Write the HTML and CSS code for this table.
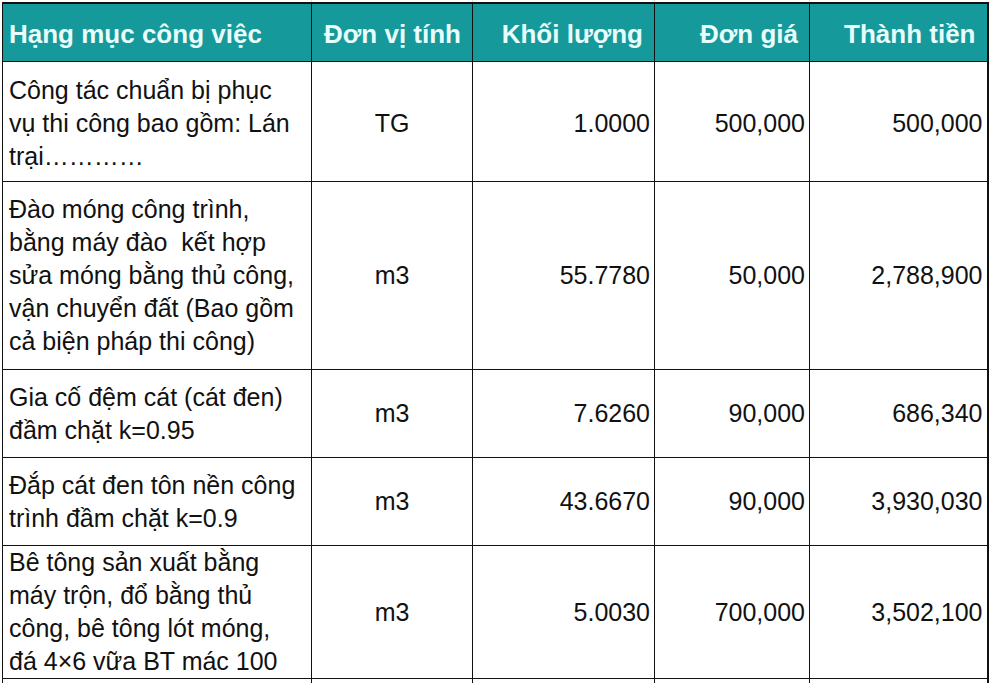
FILE: index.html
```html
<!DOCTYPE html>
<html lang="vi">
<head>
<meta charset="utf-8">
<title>Bảng dự toán</title>
<link rel="stylesheet" href="styles.css">
</head>
<body>
<table class="sheet">
  <colgroup>
    <col class="c1"><col class="c2"><col class="c3"><col class="c4"><col class="c5">
  </colgroup>
  <tr class="ghost"><td></td><td></td><td></td><td></td><td></td></tr>
  <tr class="head">
    <th class="left">Hạng mục công việc</th>
    <th>Đơn vị tính</th>
    <th>Khối lượng</th>
    <th>Đơn giá</th>
    <th>Thành tiền</th>
  </tr>
  <tr class="r1">
    <td class="text">Công tác chuẩn bị phục vụ thi công bao gồm: Lán trại…………</td>
    <td class="unit">TG</td>
    <td class="num">1.0000</td>
    <td class="num">500,000</td>
    <td class="num">500,000</td>
  </tr>
  <tr class="r2">
    <td class="text">Đào móng công trình, bằng máy đào&nbsp; kết hợp sửa móng bằng thủ công, vận chuyển đất (Bao gồm cả biện pháp thi công)</td>
    <td class="unit">m3</td>
    <td class="num">55.7780</td>
    <td class="num">50,000</td>
    <td class="num">2,788,900</td>
  </tr>
  <tr class="r3">
    <td class="text">Gia cố đệm cát (cát đen) đầm chặt k=0.95</td>
    <td class="unit">m3</td>
    <td class="num">7.6260</td>
    <td class="num">90,000</td>
    <td class="num">686,340</td>
  </tr>
  <tr class="r4">
    <td class="text">Đắp cát đen tôn nền công trình đầm chặt k=0.9</td>
    <td class="unit">m3</td>
    <td class="num">43.6670</td>
    <td class="num">90,000</td>
    <td class="num">3,930,030</td>
  </tr>
  <tr class="r5">
    <td class="text">Bê tông sản xuất bằng máy trộn, đổ bằng thủ công, bê tông lót móng, đá 4×6 vữa BT mác 100</td>
    <td class="unit">m3</td>
    <td class="num">5.0030</td>
    <td class="num">700,000</td>
    <td class="num">3,502,100</td>
  </tr>
  <tr class="r6">
    <td class="text top">Bê tông sản xuất bằng máy trộn, đổ bằng thủ công, bê tông móng</td>
    <td class="unit"></td>
    <td class="num"></td>
    <td class="num"></td>
    <td class="num"></td>
  </tr>
</table>
</body>
</html>
```

FILE: styles.css
```css
html, body {
  margin: 0;
  padding: 0;
  background: #ffffff;
  overflow: hidden;
}

body {
  font-family: "Liberation Sans", Arial, sans-serif;
  color: #111111;
  padding-left: 2px;
}

.sheet {
  border-collapse: collapse;
  table-layout: fixed;
  width: 985px;
}

.c1 { width: 309px; }
.c2 { width: 161px; }
.c3 { width: 182px; }
.c4 { width: 155px; }
.c5 { width: 178px; }

.sheet td,
.sheet th {
  border: 1px solid #111111;
  padding: 0;
  overflow: hidden;
}

.sheet td:last-child,
.sheet th:last-child {
  border-right: 2px solid #111111;
}

.ghost td {
  height: 2px;
  border-top: none;
  border-left: 1px solid #dcdcdc;
  border-right: 1px solid #dcdcdc;
}
.ghost td:first-child { border-left: none; }
.ghost td:last-child { border-right: none; }

.head th {
  height: 53px;
  background: #16999a;
  color: #e8fdfc;
  font-size: 26px;
  font-weight: bold;
  text-align: right;
  padding-right: 11px;
  padding-top: 4px;
  border-top: 2px solid #111111;
  border-bottom: 1px solid #111111;
  white-space: nowrap;
}

.head th.left {
  text-align: left;
  padding-left: 6px;
  padding-right: 0;
}

.sheet td {
  font-size: 25px;
  line-height: 33px;
  vertical-align: middle;
}

.text {
  padding-left: 6px !important;
  padding-right: 7px !important;
}

.unit { text-align: center; }

.num {
  text-align: right;
  padding-right: 4px !important;
}

.r1 td { height: 115px; padding-top: 4px; }
.r2 td { height: 187px; }
.r3 td { height: 87px; }
.r4 td { height: 87px; }
.r5 td { height: 132px; }
.r6 td { height: 120px; }

.top {
  vertical-align: top !important;
  padding-top: 2px !important;
}
```
